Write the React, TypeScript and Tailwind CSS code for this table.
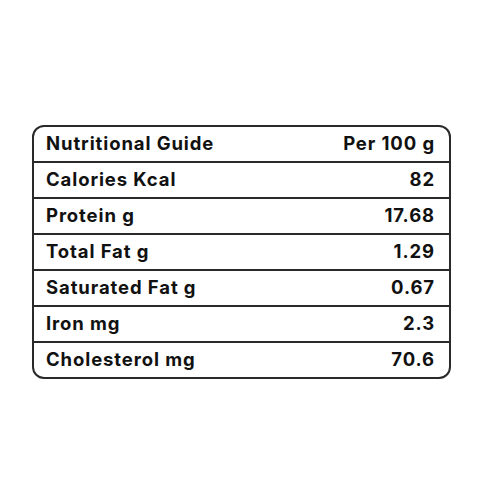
import React from "react";

const rows: [string, string][] = [
  ["Nutritional Guide", "Per 100 g"],
  ["Calories Kcal", "82"],
  ["Protein g", "17.68"],
  ["Total Fat g", "1.29"],
  ["Saturated Fat g", "0.67"],
  ["Iron mg", "2.3"],
  ["Cholesterol mg", "70.6"],
];

const App = () => {
  return (
    <div className="w-[480px] h-[480px] bg-white flex flex-col pt-[125px] pl-[32px]">
      <div
        className="w-[419px] border-2 border-[#2a2a2a] rounded-[12px] flex flex-col text-[#111] font-bold text-[18.5px] tracking-[0.9px]"
        style={{ fontFamily: "Inter, 'Noto Sans', sans-serif" }}
      >
        {rows.map(([label, value], i) => (
          <div
            key={label}
            className={`h-[34px] flex items-center justify-between pl-[12px] pr-[14px] ${
              i < rows.length - 1 ? "border-b-2 border-[#2a2a2a] box-content" : ""
            }`}
          >
            <span>{label}</span>
            <span>{value}</span>
          </div>
        ))}
      </div>
    </div>
  );
};

export default App;
